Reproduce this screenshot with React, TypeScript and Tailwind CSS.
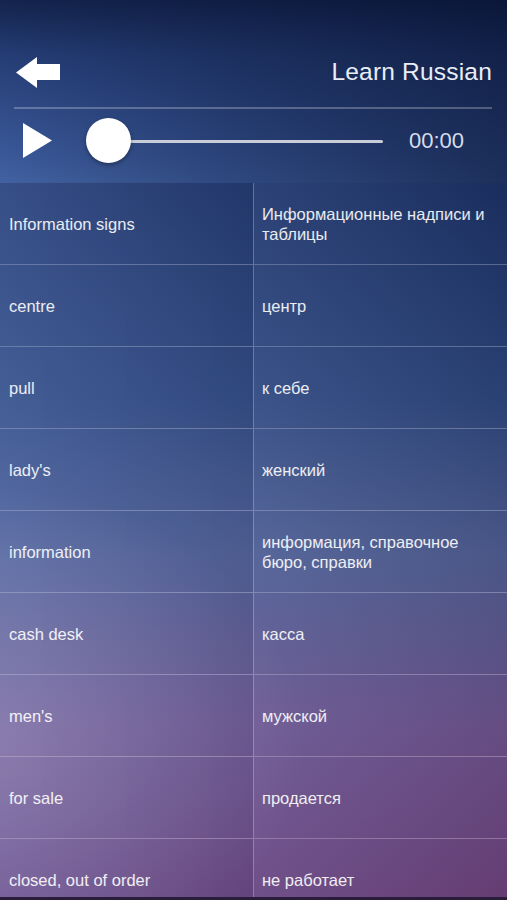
import React from "react";

const rows: [string, string][] = [
  ["Information signs", "Информационные надписи и таблицы"],
  ["centre", "центр"],
  ["pull", "к себе"],
  ["lady's", "женский"],
  ["information", "информация, справочное бюро, справки"],
  ["cash desk", "касса"],
  ["men's", "мужской"],
  ["for sale", "продается"],
  ["closed, out of order", "не работает"],
];

function BackArrow() {
  return (
    <svg width="45" height="32" viewBox="0 0 45 32" className="block">
      <polygon points="0,15.5 21,0 21,7 44,7 44,23 21,23 21,31" fill="#ffffff" />
    </svg>
  );
}

function PlayIcon() {
  return (
    <svg width="30" height="35" viewBox="0 0 30 35" className="block">
      <polygon points="0,0 29,17.5 0,35" fill="#ffffff" />
    </svg>
  );
}

export default function App() {
  return (
    <div
      className="w-[507px] h-[900px] overflow-hidden flex flex-col text-white"
      style={{ fontFamily: '"Helvetica Neue", "Liberation Sans", Arial, sans-serif' }}
    >
      {/* Header */}
      <div className="h-[183px] shrink-0 flex flex-col pl-[14px] pr-[15px] bg-[linear-gradient(to_right,rgba(5,15,45,0)_0%,rgba(5,15,45,0.3)_45%,rgba(5,15,45,0.6)_100%),linear-gradient(to_bottom,#13234c_0%,#253d75_30%,#3a5898_85%,#4262a2_100%)]">
        <div className="mt-[46px] h-[52px] flex items-center justify-between">
          <div className="ml-[2px] mt-[1px]">
            <BackArrow />
          </div>
          <div className="text-[24.5px] leading-none text-[#e9edf6] tracking-[0.2px]">Learn Russian</div>
        </div>
        <div className="mt-[9px] h-[1.5px] bg-white/25" />
        <div className="h-[64px] flex items-center">
          <div className="ml-[9px]">
            <PlayIcon />
          </div>
          <div className="ml-[33px] w-[297px] h-[45px] relative flex items-center">
            <div className="absolute left-[22px] right-0 top-[22px] h-[3px] rounded-full bg-[#c9cdd9]" />
            <div className="relative w-[45px] h-[45px] rounded-full bg-white shadow-[0_2px_4px_rgba(0,0,0,0.35)]" />
          </div>
          <div className="ml-[26px] text-[22px] leading-none text-[#d6ddec]">00:00</div>
        </div>
      </div>

      {/* Table */}
      <div className="h-[714px] shrink-0 overflow-hidden flex flex-col bg-[radial-gradient(ellipse_60%_35%_at_0%_78%,rgba(200,180,205,0.28),rgba(200,180,205,0)),linear-gradient(to_right,rgba(110,145,225,0.24)_0%,rgba(110,145,225,0.1)_50%,rgba(110,145,225,0)_100%),linear-gradient(to_bottom,#1b3063_0%,#2c4479_30%,#4d5b8e_52%,#6a5189_76%,#6a4079_100%)]">
        {rows.map(([en, ru], i) => (
          <div
            key={i}
            className="h-[82px] shrink-0 flex border-b-[1.5px] border-white/25"
          >
            <div className="w-[254px] shrink-0 flex items-center pl-[9px] pr-[8px] border-r-[1.5px] border-white/25 bg-[linear-gradient(to_right,rgba(255,255,255,0.04),rgba(0,0,0,0.05))]">
              <span className="text-[16.5px] leading-[20px] text-white/90">{en}</span>
            </div>
            <div className="flex-1 flex items-center pl-[8px] pr-[10px] bg-[linear-gradient(to_right,rgba(255,255,255,0.04),rgba(0,0,0,0.05))]">
              <span className="text-[16.5px] leading-[20px] text-white/90">{ru}</span>
            </div>
          </div>
        ))}
      </div>
      <div className="h-[3px] shrink-0 bg-[#2a1d3c]" />
    </div>
  );
}
